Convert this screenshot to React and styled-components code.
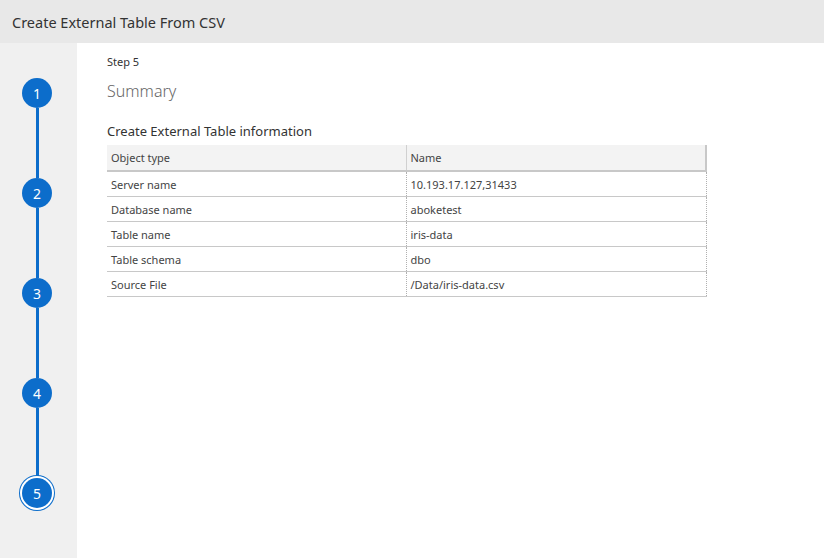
import React from 'react';
import styled, { createGlobalStyle } from 'styled-components';

const GlobalStyle = createGlobalStyle`
  html, body {
    margin: 0;
    padding: 0;
    height: 100%;
  }
  body {
    font-family: "Noto Sans", "Open Sans", sans-serif;
    background: #fff;
    color: #333;
  }
`;

const Page = styled.div`
  display: flex;
  flex-direction: column;
  width: 824px;
  height: 558px;
  overflow: hidden;
`;

const TitleBar = styled.header`
  height: 43px;
  flex: none;
  background: #e8e8e8;
  display: flex;
  align-items: center;
  padding-left: 12px;
`;

const Title = styled.h1`
  margin: 0;
  font-size: 14.5px;
  font-weight: 400;
  color: #333;
`;

const Body = styled.div`
  flex: 1;
  display: flex;
`;

const Rail = styled.nav`
  width: 77px;
  flex: none;
  background: #f0f0f0;
  display: flex;
  flex-direction: column;
  align-items: center;
  padding: 35px 3px 0 0;
  box-sizing: border-box;
`;

const Dot = styled.div`
  width: 30px;
  height: 30px;
  flex: none;
  border-radius: 50%;
  background: #0c6dcb;
  color: #fff;
  font-size: 14px;
  display: flex;
  align-items: center;
  justify-content: center;
  box-sizing: border-box;
  box-shadow: ${(p) => (p.$current ? '0 0 0 2px #fff, 0 0 0 3px #0c6dcb' : 'none')};
`;

const Connector = styled.div`
  width: 3px;
  height: 70px;
  flex: none;
  background: #0c6dcb;
`;

const Main = styled.main`
  flex: 1;
  padding: 11px 0 0 30px;
`;

const StepLabel = styled.div`
  font-size: 11px;
  line-height: 16px;
  color: #333;
`;

const Heading = styled.h2`
  margin: 9px 0 0;
  font-size: 16px;
  font-weight: 300;
  color: #666;
  line-height: 24px;
`;

const SectionTitle = styled.h3`
  margin: 18px 0 0;
  font-size: 13px;
  font-weight: 400;
  color: #333;
  line-height: 20px;
`;

const Table = styled.table`
  width: 600px;
  border-collapse: collapse;
  font-size: 11px;
  color: #444;
  margin-top: 4px;
`;

const HeadCell = styled.th`
  text-align: left;
  font-weight: 400;
  height: 25px;
  padding: 0 0 0 4px;
  background: #f3f3f3;
  border-bottom: 2px solid #c8c8c8;
  border-right: ${(p) => (p.$last ? '2px solid #c8c8c8' : '1px solid #d0d0d0')};
`;

const Cell = styled.td`
  height: 24px;
  padding: 0 0 0 4px;
  border-bottom: 1px solid #c8c8c8;
  border-right: 1px dotted #b0b0b0;
`;

const rows = [
  ['Server name', '10.193.17.127,31433'],
  ['Database name', 'aboketest'],
  ['Table name', 'iris-data'],
  ['Table schema', 'dbo'],
  ['Source File', '/Data/iris-data.csv'],
];

const steps = [1, 2, 3, 4, 5];

export default function App() {
  return (
    <Page>
      <GlobalStyle />
      <TitleBar>
        <Title>Create External Table From CSV</Title>
      </TitleBar>
      <Body>
        <Rail>
          {steps.map((n, i) => (
            <React.Fragment key={n}>
              {i > 0 && <Connector />}
              <Dot $current={n === 5}>{n}</Dot>
            </React.Fragment>
          ))}
        </Rail>
        <Main>
          <StepLabel>Step 5</StepLabel>
          <Heading>Summary</Heading>
          <SectionTitle>Create External Table information</SectionTitle>
          <Table>
            <colgroup>
              <col style={{ width: '299px' }} />
              <col />
            </colgroup>
            <thead>
              <tr>
                <HeadCell>Object type</HeadCell>
                <HeadCell $last>Name</HeadCell>
              </tr>
            </thead>
            <tbody>
              {rows.map(([k, v]) => (
                <tr key={k}>
                  <Cell>{k}</Cell>
                  <Cell>{v}</Cell>
                </tr>
              ))}
            </tbody>
          </Table>
        </Main>
      </Body>
    </Page>
  );
}
